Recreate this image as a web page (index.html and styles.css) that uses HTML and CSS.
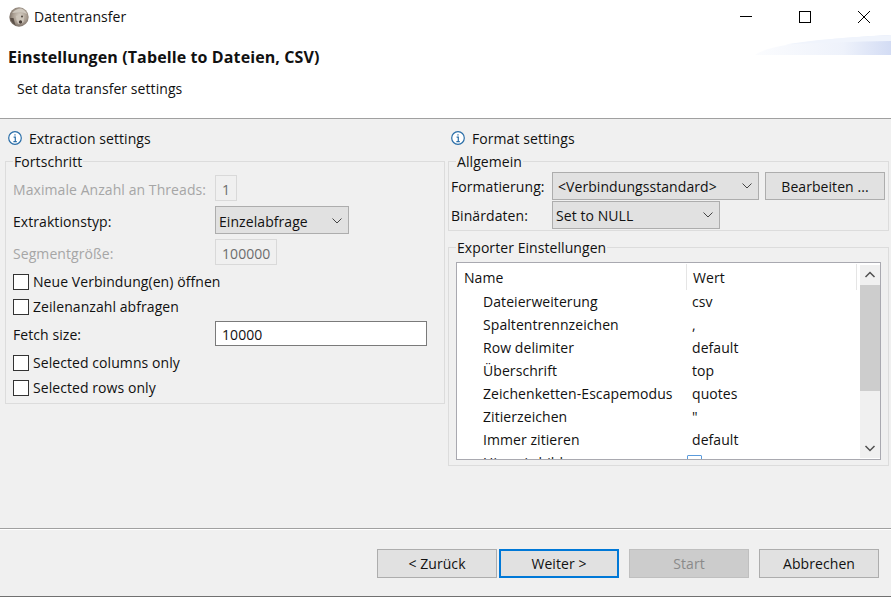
FILE: index.html
```html
<!DOCTYPE html>
<html lang="de">
<head>
    <meta charset="UTF-8">
    <title>Datentransfer</title>
    <link rel="stylesheet" href="styles.css">
</head>
<body>
<div id="dialog">
    <div id="titlebar">
        <svg class="app-icon" width="20" height="20" viewBox="0 0 20 20">
            <defs>
                <radialGradient id="face" cx="0.55" cy="0.45" r="0.6">
                    <stop offset="0" stop-color="#d9d2c8"/>
                    <stop offset="0.6" stop-color="#a89c90"/>
                    <stop offset="1" stop-color="#6f645b"/>
                </radialGradient>
            </defs>
            <circle cx="10" cy="10" r="9.7" fill="url(#face)"/>
            <path d="M3 6 Q7 1.5 12 1.5 Q16 2.5 18 7 Q13 4.5 9 5.5 Q6 5.5 3 6Z" fill="#cfc8be"/>
            <path d="M7 9 Q11 7 15 10 L14.5 15 Q11.500 18 9 16.500 Q7 13 7 9Z" fill="#cdc5ba"/>
            <circle cx="11.500" cy="15" r="1.700" fill="#4a3f38"/>
            <circle cx="13" cy="9.500" r="0.900" fill="#3f362f"/>
            <path d="M1 11 Q2.500 16 6.500 18.500 L4.500 11Z" fill="#5b5048"/>
        </svg>
        <span class="title-text">Datentransfer</span>
        <div class="win-buttons">
            <svg width="14" height="14" viewBox="0 0 14 14"><path d="M1 6.500H13" stroke="#000" fill="none"/></svg>
            <svg width="14" height="14" viewBox="0 0 14 14"><rect x="1.500" y="1.500" width="11" height="11" stroke="#000" fill="none"/></svg>
            <svg width="14" height="14" viewBox="0 0 14 14"><path d="M1 1L13 13M13 1L1 13" stroke="#000" fill="none"/></svg>
        </div>
    </div>
    <div id="header">
        <svg class="banner" width="136" height="20" viewBox="0 0 136 20">
            <defs>
                <linearGradient id="wave">
                    <stop offset="0" stop-color="#fbfcfe"/>
                    <stop offset="0.65" stop-color="#eef2fb"/>
                    <stop offset="1" stop-color="#d3dcf4"/>
                </linearGradient>
            </defs>
            <path d="M0 20 Q18 6 136 0 V20Z" fill="url(#wave)"/>
            <path d="M30 9.500 Q70 3 136 0 V6 Q80 7 30 9.500Z" fill="#f0f4fc"/>
        </svg>
        <h1>Einstellungen (Tabelle to Dateien, CSV)</h1>
        <p>Set data transfer settings</p>
    </div>
    <div id="main">
        <div class="col col-left">
            <div class="section-title">
                <svg class="info" width="14" height="14" viewBox="0 0 14 14"><circle cx="7" cy="7" r="6.300" stroke="#2a6ea8" stroke-width="1.200" fill="#fff"/><path d="M7 3.200V4.600M5.600 6.200H7.300V10.400M5.400 10.600H8.800" stroke="#2a6ea8" stroke-width="1.200" fill="none"/></svg>
                Extraction settings
            </div>
            <fieldset class="group group-progress">
                <legend>Fortschritt</legend>
                <div class="row row-threads">
                    <label class="off">Maximale Anzahl an Threads:</label>
                    <span class="field field-off field-threads">1</span>
                </div>
                <div class="row row-type">
                    <label>Extraktionstyp:</label>
                    <span class="select select-type">Einzelabfrage<svg class="chevron" width="10" height="6" viewBox="0 0 10 6"><path d="M0.500 0.500L5 5L9.500 0.500" stroke="#444" fill="none"/></svg></span>
                </div>
                <div class="row row-segment">
                    <label class="off">Segmentgröße:</label>
                    <span class="field field-off field-segment">100000</span>
                </div>
                <div class="check check-first"><span class="box"></span>Neue Verbindung(en) öffnen</div>
                <div class="check"><span class="box"></span>Zeilenanzahl abfragen</div>
                <div class="row row-fetch">
                    <label>Fetch size:</label>
                    <span class="field field-fetch">10000</span>
                </div>
                <div class="check check-after"><span class="box"></span>Selected columns only</div>
                <div class="check"><span class="box"></span>Selected rows only</div>
            </fieldset>
        </div>
        <div class="col col-right">
            <div class="section-title">
                <svg class="info" width="14" height="14" viewBox="0 0 14 14"><circle cx="7" cy="7" r="6.300" stroke="#2a6ea8" stroke-width="1.200" fill="#fff"/><path d="M7 3.200V4.600M5.600 6.200H7.300V10.400M5.400 10.600H8.800" stroke="#2a6ea8" stroke-width="1.200" fill="none"/></svg>
                Format settings
            </div>
            <fieldset class="group group-general">
                <legend>Allgemein</legend>
                <div class="row-format">
                    <label>Formatierung:</label>
                    <span class="select select-format">&lt;Verbindungsstandard&gt;<svg class="chevron" width="10" height="6" viewBox="0 0 10 6"><path d="M0.500 0.500L5 5L9.500 0.500" stroke="#444" fill="none"/></svg></span>
                    <span class="btn btn-edit">Bearbeiten ...</span>
                </div>
                <div class="row-format">
                    <label>Binärdaten:</label>
                    <span class="select select-binary">Set to NULL<svg class="chevron" width="10" height="6" viewBox="0 0 10 6"><path d="M0.500 0.500L5 5L9.500 0.500" stroke="#444" fill="none"/></svg></span>
                </div>
            </fieldset>
            <fieldset class="group group-exporter">
                <legend>Exporter Einstellungen</legend>
                <div class="table-box">
                    <div class="table-scroll">
                        <div class="thead">
                            <span class="th th-name">Name</span>
                            <span class="th th-value">Wert</span>
                        </div>
                        <div class="tr"><span class="td-name">Dateierweiterung</span><span class="td-value">csv</span></div>
                        <div class="tr"><span class="td-name">Spaltentrennzeichen</span><span class="td-value">,</span></div>
                        <div class="tr"><span class="td-name">Row delimiter</span><span class="td-value">default</span></div>
                        <div class="tr"><span class="td-name">Überschrift</span><span class="td-value">top</span></div>
                        <div class="tr"><span class="td-name">Zeichenketten-Escapemodus</span><span class="td-value">quotes</span></div>
                        <div class="tr"><span class="td-name">Zitierzeichen</span><span class="td-value">"</span></div>
                        <div class="tr"><span class="td-name">Immer zitieren</span><span class="td-value">default</span></div>
                        <div class="tr"><span class="td-name">Hinweis bild</span><span class="td-value td-check"><span class="mini-box"></span></span></div>
                    </div>
                    <div class="scrollbar">
                        <svg width="20" height="20" viewBox="0 0 20 20"><path d="M5.500 12L10 7.500L14.500 12" stroke="#505050" stroke-width="1.500" fill="none"/></svg>
                        <div class="track"><div class="thumb"></div></div>
                        <svg width="20" height="20" viewBox="0 0 20 20"><path d="M5.500 8L10 12.500L14.500 8" stroke="#505050" stroke-width="1.500" fill="none"/></svg>
                    </div>
                </div>
            </fieldset>
        </div>
    </div>
    <div id="footer">
        <span class="btn btn-footer">&lt; Zurück</span>
        <span class="btn btn-footer btn-default">Weiter &gt;</span>
        <span class="btn btn-footer btn-disabled">Start</span>
        <span class="btn btn-footer btn-cancel">Abbrechen</span>
    </div>
</div>
</body>
</html>
```

FILE: styles.css
```css
*{
    margin:0;
    padding:0;
    box-sizing:border-box;
}
html,body{
    width:891px;
    height:597px;
    overflow:hidden;
}
body{
    font-family:"Open Sans","Noto Sans",sans-serif;
    font-size:14px;
    color:#111;
    background:#f0f0f0;
}
#dialog{
    width:891px;
    height:597px;
    display:flex;
    flex-direction:column;
    letter-spacing:0.07px;
}

#titlebar{
    height:35px;
    background:#fff;
    display:flex;
    align-items:center;
    padding:0 0 2px 9px;
}
.app-icon{
    margin-right:5px;
}
.win-buttons{
    margin-left:auto;
    display:flex;
    gap:45px;
    padding-right:20px;
}

#header{
    height:84px;
    background:#fff;
    border-bottom:1px solid #a0a0a0;
    position:relative;
}
.banner{
    position:absolute;
    right:0;
    top:0;
}
#header h1{
    font-size:16px;
    font-weight:700;
    padding:11px 0 0 8px;
    line-height:22px;
    letter-spacing:0.11px;
    position:relative;
}
#header p{
    padding:11px 0 0 17px;
    line-height:20px;
}

#main{
    height:410px;
    display:flex;
    border-bottom:1px solid #a0a0a0;
}
.col{
    display:flex;
    flex-direction:column;
}
.col-left{
    width:448px;
    padding-left:5px;
}
.col-right{
    width:443px;
}
.section-title{
    height:20px;
    margin-top:9px;
    display:flex;
    align-items:center;
    gap:7px;
    padding-left:3px;
}
.info{
    flex:none;
}
.group{
    border:1px solid #dcdcdc;
    min-width:0;
}
.group legend{
    padding:0 1px;
    height:20px;
    line-height:22px;
}
.group-progress{
    width:440px;
    height:253px;
    margin-top:3px;
    padding:4px 7px 0;
}
.group-general{
    width:441px;
    height:80px;
    margin-top:3px;
    padding:1px 2px 0;
}
.group-general legend{
    margin-left:5px;
}
.group-exporter{
    width:441px;
    height:229px;
    margin-top:6px;
    padding:5px 7px 0;
}

.row{
    display:flex;
    align-items:center;
}
.row label{
    width:202px;
    padding-top:2px;
}
.off{
    color:#a6a6a6;
}
.row-threads{
    height:26px;
}
.row-type{
    height:28px;
    margin-top:5px;
}
.row-segment{
    height:26px;
    margin-top:5px;
}
.row-fetch{
    height:25px;
    margin-top:7px;
}
.field{
    display:flex;
    align-items:center;
    height:100%;
    padding:2px 0 0 6px;
    border:1px solid #7a7a7a;
    background:#fff;
}
.field-off{
    border:1px solid #d9d9d9;
    background:#f0f0f0;
    color:#6d6d6d;
}
.field-threads{
    width:22px;
}
.field-segment{
    width:62px;
}
.field-fetch{
    width:212px;
}
.select{
    display:flex;
    align-items:center;
    justify-content:space-between;
    height:28px;
    background:#e1e1e1;
    border:1px solid #adadad;
    padding:0 6px 0 3px;
}
.select-type{
    width:134px;
    padding-top:2px;
}
.select-format{
    width:207px;
    padding-left:5px;
}
.select-binary{
    width:168px;
}
.chevron{
    flex:none;
}
.check{
    display:flex;
    align-items:center;
    height:15px;
    gap:4px;
    margin-top:10px;
}
.check-first{
    margin-top:9px;
}
.check-after{
    margin-top:9px;
}
.box{
    width:16px;
    height:16px;
    flex:none;
    border:1px solid #333;
    background:#fff;
}

.row-format{
    display:flex;
    align-items:center;
    height:28px;
    margin-bottom:1px;
}
.row-format label{
    width:101px;
}
.btn{
    display:flex;
    align-items:center;
    justify-content:center;
    background:#e1e1e1;
    border:1px solid #adadad;
}
.btn-edit{
    width:120px;
    height:28px;
    margin-left:6px;
}

.table-box{
    width:425px;
    height:198px;
    border:1px solid #a9a9b0;
    background:#fff;
    display:flex;
    overflow:hidden;
}
.table-scroll{
    width:402px;
    overflow:hidden;
}
.thead{
    height:26px;
    display:flex;
    align-items:center;
    margin-top:1px;
}
.th{
    height:26px;
    line-height:28px;
    border-right:1px solid #e5e5e5;
}
.th-name{
    width:230px;
    padding-left:7px;
}
.th-value{
    width:170px;
    padding-left:6px;
}
.tr{
    height:23px;
    line-height:23px;
    display:flex;
    white-space:nowrap;
}
.td-name{
    width:230px;
    padding-left:26px;
}
.td-value{
    padding-left:5px;
}
.td-check{
    display:flex;
    align-items:center;
    padding-left:0;
}
.mini-box{
    width:15px;
    height:15px;
    border:1px solid #5b9bdc;
    border-radius:1px;
}
.scrollbar{
    width:20px;
    margin-left:1px;
    margin-top:2px;
    margin-bottom:1px;
    display:flex;
    flex-direction:column;
    background:#f0f0f0;
}
.scrollbar svg{
    flex:none;
}
.track{
    flex:1;
}
.thumb{
    height:106px;
    background:#cdcdcd;
}

#footer{
    flex:1;
    border-top:1px solid #fff;
    border-bottom:1px solid #707070;
    display:flex;
    align-items:flex-start;
    padding:19px 0 0 377px;
}
.btn-footer{
    width:120px;
    height:29px;
    margin-right:2px;
}
.btn-default{
    border:2px solid #0078d7;
    margin-right:10px;
}
.btn-disabled{
    background:#cccccc;
    border-color:#bfbfbf;
    color:#8a8a8a;
    margin-right:10px;
}
```
